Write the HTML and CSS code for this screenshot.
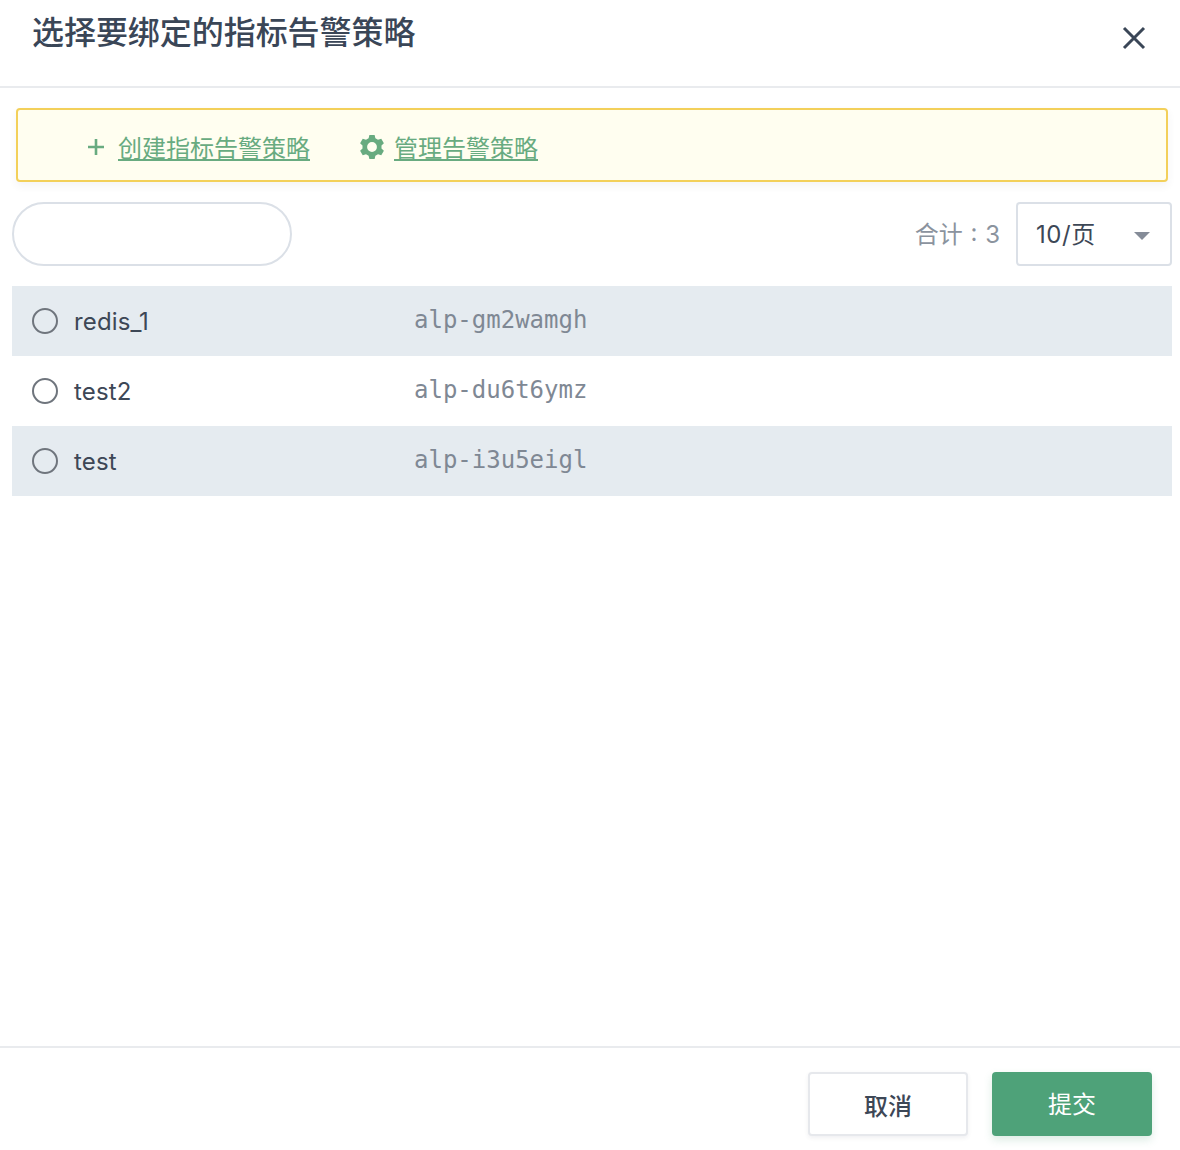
FILE: index.html
```html
<!DOCTYPE html>
<html>

<head>
  <meta charset="utf-8" />
  <title>选择要绑定的指标告警策略</title>
  <link rel="stylesheet" href="styles.css">
</head>

<body>
  <div class="dialog">
    <div class="dialog-head">
      <h3 class="dialog-title">选择要绑定的指标告警策略</h3>
      <button class="close-btn" aria-label="close">
        <svg width="24" height="24" viewBox="0 0 24 24"><path d="M2 2L22 22M22 2L2 22" /></svg>
      </button>
    </div>

    <div class="dialog-body">
      <div class="notice">
        <span class="notice-item">
          <svg class="icon-plus" width="16" height="16" viewBox="0 0 16 16"><path d="M8 0V16M0 8H16" /></svg>
          <a class="notice-link" href="#">创建指标告警策略</a>
        </span>
        <span class="notice-item">
          <svg class="icon-gear" width="24" height="24" viewBox="1 1 22 22"><path fill-rule="evenodd" d="M9.6 1h4.8l.7 3 2.400 1.400 3-.9 2.400 4.100-2.200 2.100v2.600l2.200 2.100-2.400 4.100-3-.9-2.400 1.400-.7 3H9.600l-.7-3-2.400-1.400-3 .9-2.400-4.100 2.200-2.100v-2.600L1.100 8.600l2.400-4.100 3 .9L8.900 4zM12 7.500a4.500 4.500 0 1 0 0 9 4.500 4.500 0 0 0 0-9z" /></svg>
          <a class="notice-link" href="#">管理告警策略</a>
        </span>
      </div>

      <div class="toolbar">
        <input class="search" type="text">
        <div class="pager">
          <span class="total">合计 : 3</span>
          <div class="page-size">
            <span class="page-size-text">10/页</span>
            <i class="caret"></i>
          </div>
        </div>
      </div>

      <div class="rows">
        <label class="row">
          <i class="radio"></i>
          <span class="row-name">redis_1</span>
          <span class="row-id">alp-gm2wamgh</span>
        </label>
        <label class="row">
          <i class="radio"></i>
          <span class="row-name">test2</span>
          <span class="row-id">alp-du6t6ymz</span>
        </label>
        <label class="row">
          <i class="radio"></i>
          <span class="row-name">test</span>
          <span class="row-id">alp-i3u5eigl</span>
        </label>
      </div>
    </div>

    <div class="dialog-foot">
      <button class="btn btn-cancel">取消</button>
      <button class="btn btn-submit">提交</button>
    </div>
  </div>
</body>

</html>
```

FILE: styles.css
```css
html,
body {
  margin: 0;
  background: #fff;
  color: #3d4756;
  font-family: Inter, "Noto Sans CJK SC", sans-serif;
}

.dialog {
  display: flex;
  flex-direction: column;
  height: 1150px;
  overflow: hidden;
}

.dialog-head {
  display: flex;
  justify-content: space-between;
  height: 86px;
  padding: 0 34px 0 32px;
  border-bottom: 2px solid #e9ebee;
}

.dialog-title {
  margin: 12px 0 0;
  font-size: 32px;
  line-height: 42px;
  font-weight: 500;
  letter-spacing: -.05px;
  color: #3a4657;
}

.close-btn {
  width: 24px;
  height: 24px;
  margin-top: 26px;
  padding: 0;
  border: 0;
  background: none;
}

.close-btn path {
  fill: none;
  stroke: #3a4657;
  stroke-width: 3;
}

.dialog-body {
  flex: 1;
  padding: 20px 8px 0 12px;
}

.notice {
  display: flex;
  align-items: center;
  gap: 50px;
  height: 74px;
  box-sizing: border-box;
  margin: 0 4px;
  padding: 8px 0 0 70px;
  background: #fffef0;
  border: 2px solid #f3d05a;
  border-radius: 4px;
  box-shadow: 0 4px 8px rgba(60, 70, 90, .06);
}

.notice-item {
  display: flex;
  align-items: center;
  gap: 14px;
}

.notice-item .icon-gear {
  margin: -4px -4px 0 0;
}

.notice-item .icon-plus {
  margin-top: -4px;
}

.icon-plus path {
  fill: none;
  stroke: #68ab80;
  stroke-width: 2.6;
}

.icon-gear path {
  fill: #68ab80;
}

.notice-link {
  color: #68ab80;
  font-size: 24px;
  line-height: 32px;
  text-decoration: underline;
}

.toolbar {
  display: flex;
  justify-content: space-between;
  margin-top: 20px;
}

.search {
  width: 280px;
  height: 64px;
  box-sizing: border-box;
  background: #fff;
  border: 2px solid #dbe0e7;
  border-radius: 32px;
  outline: none;
}

.pager {
  display: flex;
  align-items: center;
  gap: 16px;
}

.total {
  margin-bottom: 4px;
  color: #8b939e;
  font-size: 24px;
  word-spacing: 1px;
}

.page-size {
  display: flex;
  justify-content: space-between;
  align-items: center;
  width: 156px;
  height: 64px;
  box-sizing: border-box;
  padding: 0 20px 0 18px;
  border: 2px solid #dbe0e7;
  border-radius: 4px;
  font-size: 24px;
}

.page-size-text {
  margin-bottom: 4px;
  letter-spacing: .6px;
}

.caret {
  margin-top: 4px;
  border-top: 8px solid #858c98;
  border-left: 8px solid transparent;
  border-right: 8px solid transparent;
}

.rows {
  margin-top: 20px;
}

.row {
  display: flex;
  align-items: center;
  height: 70px;
  padding-left: 20px;
}

.row:nth-child(odd) {
  background: #e5ebf0;
}

.radio {
  width: 26px;
  height: 26px;
  box-sizing: border-box;
  margin-right: 16px;
  border: 2px solid #6f757d;
  border-radius: 50%;
  background: #fff;
}

.row:nth-child(odd) .radio {
  background: transparent;
}

.row-name {
  width: 340px;
  font-size: 24px;
  letter-spacing: .15px;
}

.row-id {
  margin-top: -2px;
  color: #7f8894;
  font-family: "DejaVu Sans Mono", monospace;
  font-size: 24px;
}

.dialog-foot {
  display: flex;
  justify-content: flex-end;
  gap: 24px;
  height: 104px;
  padding: 24px 28px 0 0;
  box-sizing: border-box;
  border-top: 2px solid #e9ebee;
}

.btn {
  width: 160px;
  height: 64px;
  box-sizing: border-box;
  border-radius: 4px;
  font-family: inherit;
  font-size: 24px;
}

.btn-cancel {
  background: #fff;
  color: #3d4756;
  font-weight: 500;
  border: 2px solid #e6e8ec;
  box-shadow: 0 2px 4px rgba(60, 70, 90, .08);
}

.btn-submit {
  padding-bottom: 4px;
  background: #4ea279;
  color: #fff;
  border: 0;
  box-shadow: 0 4px 8px rgba(78, 162, 121, .2);
}
```
